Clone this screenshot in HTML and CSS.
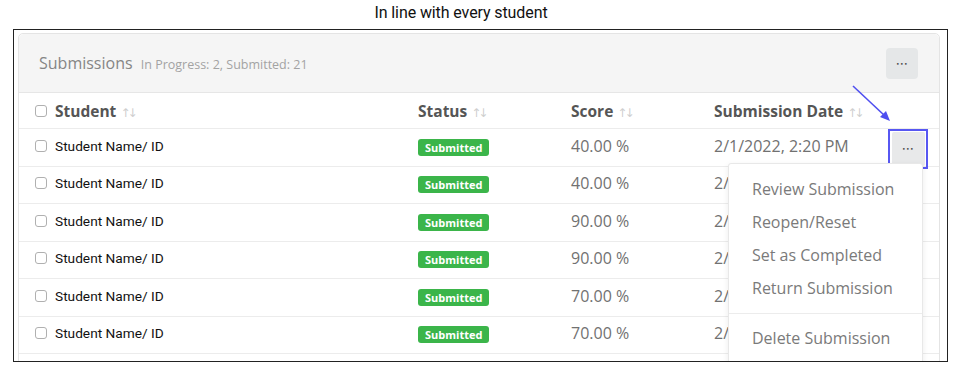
FILE: index.html
```html
<!DOCTYPE html>
<html lang="en">
<head>
  <meta charset="UTF-8">
  <title>Submissions</title>
  <link rel="stylesheet" href="styles.css">
</head>
<body>

  <div class="titulo">In line with every student</div>

  <div class="quadro">
    <div class="painel">
      <div class="painel-topo">
        <div>
          <span class="painel-nome">Submissions</span>
          <span class="painel-info">In Progress: 2, Submitted: 21</span>
        </div>
        <button class="botao-mais">&bull;&bull;&bull;</button>
      </div>

      <div class="linha cabeca">
        <span class="caixa"></span>
        <span>Student <i class="seta">&uarr;&darr;</i></span>
        <span>Status <i class="seta">&uarr;&darr;</i></span>
        <span>Score <i class="seta">&uarr;&darr;</i></span>
        <span>Submission Date <i class="seta">&uarr;&darr;</i></span>
        <span></span>
      </div>

      <div class="linha">
        <span class="caixa"></span>
        <span class="aluno">Student Name/ ID</span>
        <span><b class="selo">Submitted</b></span>
        <span class="valor">40.00 %</span>
        <span class="valor">2/1/2022, 2:20 PM</span>
        <span class="destacado"><button class="botao-mais">&bull;&bull;&bull;</button></span>
      </div>
      <div class="linha">
        <span class="caixa"></span>
        <span class="aluno">Student Name/ ID</span>
        <span><b class="selo">Submitted</b></span>
        <span class="valor">40.00 %</span>
        <span class="valor">2/1/2022, 2:20 PM</span>
        <span></span>
      </div>
      <div class="linha">
        <span class="caixa"></span>
        <span class="aluno">Student Name/ ID</span>
        <span><b class="selo">Submitted</b></span>
        <span class="valor">90.00 %</span>
        <span class="valor">2/1/2022, 2:20 PM</span>
        <span></span>
      </div>
      <div class="linha">
        <span class="caixa"></span>
        <span class="aluno">Student Name/ ID</span>
        <span><b class="selo">Submitted</b></span>
        <span class="valor">90.00 %</span>
        <span class="valor">2/1/2022, 2:20 PM</span>
        <span></span>
      </div>
      <div class="linha">
        <span class="caixa"></span>
        <span class="aluno">Student Name/ ID</span>
        <span><b class="selo">Submitted</b></span>
        <span class="valor">70.00 %</span>
        <span class="valor">2/1/2022, 2:20 PM</span>
        <span></span>
      </div>
      <div class="linha">
        <span class="caixa"></span>
        <span class="aluno">Student Name/ ID</span>
        <span><b class="selo">Submitted</b></span>
        <span class="valor">70.00 %</span>
        <span class="valor">2/1/2022, 2:20 PM</span>
        <span></span>
      </div>
    </div>

    <!-- menu aberto da primeira linha -->
    <ul class="menu">
      <li>Review Submission</li>
      <li>Reopen/Reset</li>
      <li>Set as Completed</li>
      <li>Return Submission</li>
      <li class="divisor"></li>
      <li>Delete Submission</li>
    </ul>

    <svg class="flecha" width="44" height="42" viewBox="0 0 44 42">
      <line x1="2" y1="2" x2="34" y2="32" stroke="#4f4ff0" stroke-width="1.6"/>
      <polygon points="39,37 29,33 35,27" fill="#4f4ff0"/>
    </svg>
  </div>

</body>
</html>
```

FILE: styles.css
```css
/* Reset básico */
* {
  margin: 0;
  padding: 0;
  box-sizing: border-box;
}

body {
  font-family: "Open Sans", sans-serif;
  background-color: white;
  color: #333;
}

.titulo {
  height: 29px;
  padding: 3px 40px 0 0;
  text-align: center;
  font-family: Roboto, sans-serif;
  font-size: 16px;
  color: #111;
  letter-spacing: -0.1px;
}

/* Moldura preta */
.quadro {
  position: relative;
  width: 935px;
  height: 333px;
  margin-left: 13px;
  border: 1px solid #222;
  padding: 3px 7px 0 4px;
  overflow: hidden;
}

.painel {
  min-height: 345px;
  border: 1px solid #e4e4e4;
  border-radius: 5px;
  background-color: white;
}

.painel-topo {
  display: flex;
  justify-content: space-between;
  align-items: center;
  height: 59px;
  padding: 0 21px 0 20px;
  background-color: #f5f5f5;
  border-bottom: 1px solid #e6e6e6;
  border-radius: 5px 5px 0 0;
}

.painel-nome {
  font-size: 16px;
  color: #858585;
}

.painel-info {
  font-size: 12.5px;
  color: #a3a3a3;
  margin-left: 4px;
}

.botao-mais {
  width: 32px;
  height: 31px;
  border: none;
  border-radius: 4px;
  background-color: #e5e7e8;
  color: #444;
  font-size: 6px;
  letter-spacing: 0.5px;
  font-family: "DejaVu Sans", sans-serif;
}

/* Linhas da tabela */
.linha {
  display: grid;
  grid-template-columns: 20px 363px 153px 143px 174px 40px;
  align-items: center;
  height: 37.5px;
  padding: 0 0 3px 16px;
  border-bottom: 1px solid #ececec;
}

.linha.cabeca {
  height: 36px;
  padding-bottom: 0;
  font-weight: bold;
  font-size: 15.5px;
  color: #555;
}

.seta {
  font-style: normal;
  font-weight: normal;
  font-family: "DejaVu Sans", sans-serif;
  font-size: 12px;
  color: #cfcfcf;
  letter-spacing: -3px;
}

.caixa {
  width: 12px;
  height: 12px;
  border: 1px solid #b0b0b0;
  border-radius: 3px;
}

.aluno {
  font-family: Roboto, sans-serif;
  font-size: 13.7px;
  color: #111;
}

.selo {
  display: inline-block;
  height: 17px;
  line-height: 17px;
  padding: 0 7px;
  border-radius: 3px;
  background-color: #3bb54a;
  color: white;
  font-size: 11px;
  font-weight: bold;
}

.valor {
  font-size: 16px;
  color: #717171;
}

.destacado {
  display: flex;
  justify-content: center;
  align-items: center;
  width: 40px;
  height: 40px;
  border: 2px solid #5757f2;
  margin: -1px 0 -7px;
}

.destacado .botao-mais {
  width: 33px;
  height: 34px;
  border-radius: 2px;
  background-color: #e8e9ea;
}

/* Menu suspenso */
.menu {
  position: absolute;
  left: 714px;
  top: 133px;
  width: 195px;
  height: 230px;
  list-style: none;
  padding: 9px 0 8px;
  background-color: white;
  border: 1px solid #e8e8e8;
  border-radius: 3px;
  box-shadow: 0 2px 6px rgba(0, 0, 0, 0.08);
}

.menu li {
  height: 33px;
  line-height: 33px;
  padding-left: 23px;
  font-size: 16px;
  color: #7a7a7a;
}

.menu li.divisor {
  height: 1px;
  margin: 8px 0;
  background-color: #ececec;
}

.flecha {
  position: absolute;
  left: 837px;
  top: 54px;
}
```
